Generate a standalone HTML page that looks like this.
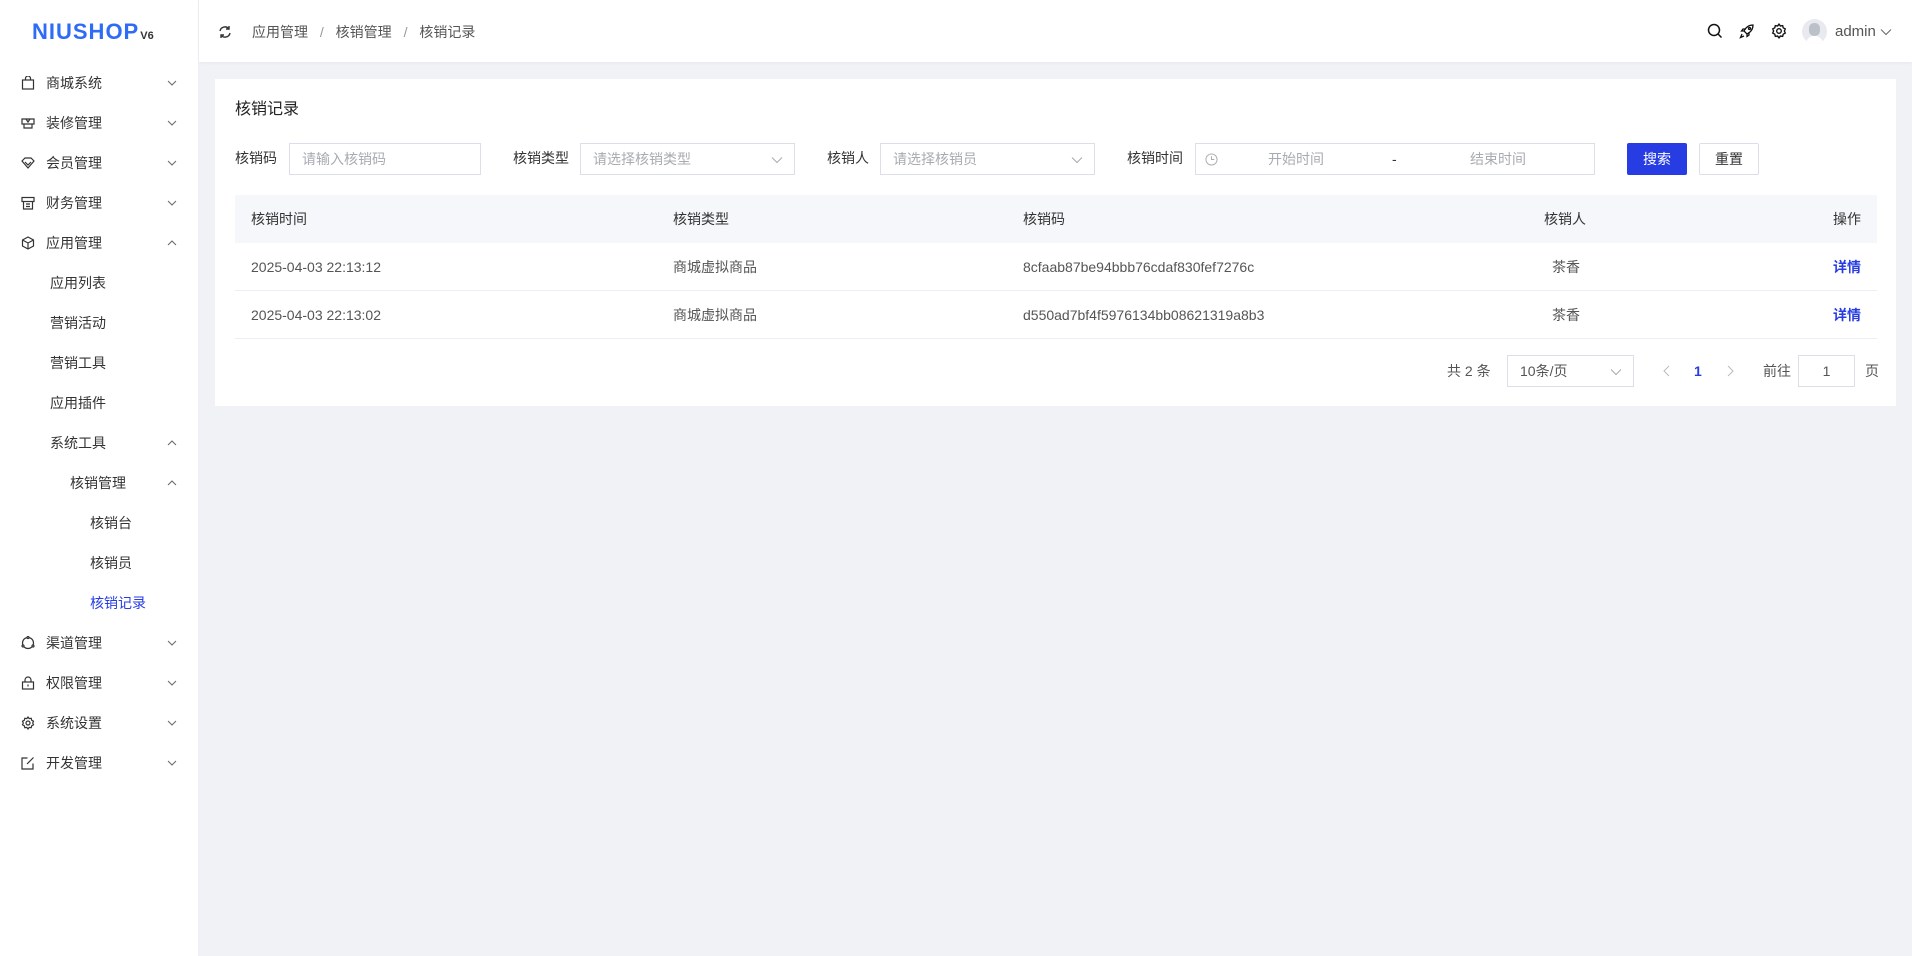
<!DOCTYPE html>
<html><head><meta charset="utf-8"><style>
*{box-sizing:border-box;margin:0;padding:0}
body{width:1912px;height:956px;background:#f0f2f5;font-family:"Liberation Sans","Noto Sans CJK SC",sans-serif;font-size:14px;color:#333;position:relative;overflow:hidden}
.abs{position:absolute}
.side{left:0;top:0;width:199px;height:956px;background:#fff;border-right:1px solid #eef0f3}
.logo{left:32px;top:19px;font-weight:900;font-size:22px;color:#2f6cf6;letter-spacing:1px;font-family:"Liberation Sans",sans-serif}
.logo small{font-size:11px;color:#333;font-weight:700;margin-left:1px;letter-spacing:0}
.mi{position:absolute;left:0;width:199px;height:40px;line-height:40px;color:#333;font-size:14px;white-space:nowrap}
.mi svg.ic{position:absolute;left:21px;top:13px}
.mi .ch{position:absolute;left:167px;top:16px}
.hdr{left:199px;top:0;width:1713px;height:62px;background:#fff;box-shadow:0 1px 3px rgba(0,0,0,.04)}
.card{left:215px;top:79px;width:1681px;height:327px;background:#fff}
.lbl{font-size:14px;color:#333;line-height:31px;top:143px}
.inp{top:143px;height:32px;border:1px solid #dcdfe6;background:#fff;color:#a8abb2;line-height:30px;padding-left:12px;font-size:14px}
.th{top:195px;left:235px;width:1642px;height:48px;background:#f5f7fa}
.row{left:235px;width:1642px;height:48px;border-bottom:1px solid #ebeef5}
.t{position:absolute;line-height:48px;font-size:14px;color:#555;white-space:nowrap}
.th .t{color:#333}
</style></head><body>
<div class="abs side">
<div class="abs logo">NIUSHOP<small>V6</small></div>
</div>
<div style="position:absolute;left:0;top:0">
<div class="mi" style="top:63px"><svg class="ic" width="14" height="14" viewBox="0 0 14 14" fill="none" stroke="#333" stroke-width="1.2"><rect x="1.5" y="4" width="11" height="9"/><path d="M4.5 4V2.5a2.5 2.5 0 0 1 5 0V4"/></svg><span style="position:absolute;left:46px">商城系统</span><svg class="ch" width="10" height="8" viewBox="0 0 10 8" fill="none" stroke="#666"><path d="M1 2l4 4 4-4"/></svg></div>
<div class="mi" style="top:103px"><svg class="ic" width="14" height="14" viewBox="0 0 14 14" fill="none" stroke="#333" stroke-width="1.2"><path d="M1 3h12v5H1zM3 8v4h8V8M5 3l2 3 2-3"/></svg><span style="position:absolute;left:46px">装修管理</span><svg class="ch" width="10" height="8" viewBox="0 0 10 8" fill="none" stroke="#666"><path d="M1 2l4 4 4-4"/></svg></div>
<div class="mi" style="top:143px"><svg class="ic" width="14" height="14" viewBox="0 0 14 14" fill="none" stroke="#333" stroke-width="1.2"><path d="M1 5l3-3h6l3 3-6 7z"/><path d="M4 6l3 3 3-3"/></svg><span style="position:absolute;left:46px">会员管理</span><svg class="ch" width="10" height="8" viewBox="0 0 10 8" fill="none" stroke="#666"><path d="M1 2l4 4 4-4"/></svg></div>
<div class="mi" style="top:183px"><svg class="ic" width="14" height="14" viewBox="0 0 14 14" fill="none" stroke="#333" stroke-width="1.2"><rect x="1" y="1.5" width="12" height="4"/><path d="M2.5 5.5V13h9V5.5M5 8h4M5 10.5h4"/></svg><span style="position:absolute;left:46px">财务管理</span><svg class="ch" width="10" height="8" viewBox="0 0 10 8" fill="none" stroke="#666"><path d="M1 2l4 4 4-4"/></svg></div>
<div class="mi" style="top:223px"><svg class="ic" width="14" height="14" viewBox="0 0 14 14" fill="none" stroke="#333" stroke-width="1.2"><path d="M7 1l5.5 3v6L7 13 1.5 10V4zM1.5 4L7 7l5.5-3M7 7v6"/></svg><span style="position:absolute;left:46px">应用管理</span><svg class="ch" width="10" height="8" viewBox="0 0 10 8" fill="none" stroke="#666"><path d="M1 6l4-4 4 4"/></svg></div>
<div class="mi" style="top:263px"><span style="position:absolute;left:50px">应用列表</span></div>
<div class="mi" style="top:303px"><span style="position:absolute;left:50px">营销活动</span></div>
<div class="mi" style="top:343px"><span style="position:absolute;left:50px">营销工具</span></div>
<div class="mi" style="top:383px"><span style="position:absolute;left:50px">应用插件</span></div>
<div class="mi" style="top:423px"><span style="position:absolute;left:50px">系统工具</span><svg class="ch" width="10" height="8" viewBox="0 0 10 8" fill="none" stroke="#666"><path d="M1 6l4-4 4 4"/></svg></div>
<div class="mi" style="top:463px"><span style="position:absolute;left:70px">核销管理</span><svg class="ch" width="10" height="8" viewBox="0 0 10 8" fill="none" stroke="#666"><path d="M1 6l4-4 4 4"/></svg></div>
<div class="mi" style="top:503px"><span style="position:absolute;left:90px">核销台</span></div>
<div class="mi" style="top:543px"><span style="position:absolute;left:90px">核销员</span></div>
<div class="mi" style="top:583px;color:#273de3"><span style="position:absolute;left:90px">核销记录</span></div>
<div class="mi" style="top:623px"><svg class="ic" width="14" height="14" viewBox="0 0 14 14" fill="none" stroke="#333" stroke-width="1.2"><circle cx="7" cy="7" r="5.5"/><circle cx="7" cy="1.5" r="1" fill="#fff"/><circle cx="2" cy="10" r="1" fill="#fff"/><circle cx="12" cy="10" r="1" fill="#fff"/></svg><span style="position:absolute;left:46px">渠道管理</span><svg class="ch" width="10" height="8" viewBox="0 0 10 8" fill="none" stroke="#666"><path d="M1 2l4 4 4-4"/></svg></div>
<div class="mi" style="top:663px"><svg class="ic" width="14" height="14" viewBox="0 0 14 14" fill="none" stroke="#333" stroke-width="1.2"><rect x="1.5" y="6" width="11" height="7"/><path d="M4 6V4a3 3 0 0 1 6 0v2M7 8.5v2"/></svg><span style="position:absolute;left:46px">权限管理</span><svg class="ch" width="10" height="8" viewBox="0 0 10 8" fill="none" stroke="#666"><path d="M1 2l4 4 4-4"/></svg></div>
<div class="mi" style="top:703px"><svg class="ic" width="14" height="14" viewBox="0 0 14 14" fill="none" stroke="#333" stroke-width="1.2"><path d="M7 1l1.2 1.6 2-.3.5 1.9 1.8 1-.8 1.8.8 1.8-1.8 1-.5 1.9-2-.3L7 13l-1.2-1.6-2 .3-.5-1.9-1.8-1 .8-1.8-.8-1.8 1.8-1 .5-1.9 2 .3z"/><circle cx="7" cy="7" r="2"/></svg><span style="position:absolute;left:46px">系统设置</span><svg class="ch" width="10" height="8" viewBox="0 0 10 8" fill="none" stroke="#666"><path d="M1 2l4 4 4-4"/></svg></div>
<div class="mi" style="top:743px"><svg class="ic" width="14" height="14" viewBox="0 0 14 14" fill="none" stroke="#333" stroke-width="1.2"><path d="M12 7.5V13H1V2h5.5M6 8l6.5-6.5"/></svg><span style="position:absolute;left:46px">开发管理</span><svg class="ch" width="10" height="8" viewBox="0 0 10 8" fill="none" stroke="#666"><path d="M1 2l4 4 4-4"/></svg></div>
</div>
<div class="abs hdr">
<svg class="abs" style="left:19px;top:25px" width="14" height="14" viewBox="0 0 14 14" fill="none" stroke="#333" stroke-width="1.4"><path d="M2 6a5 5 0 0 1 9-2M12 8a5 5 0 0 1-9 2"/><path d="M11 1v3H8M3 13v-3h3"/></svg>
<div class="abs" style="left:53px;top:22px;line-height:20px;color:#555">应用管理 <span style="color:#999;margin:0 8px">/</span> 核销管理 <span style="color:#999;margin:0 8px">/</span> 核销记录</div>
<svg class="abs" style="left:1508px;top:23px" width="16" height="16" viewBox="0 0 16 16" fill="none" stroke="#111" stroke-width="1.5"><circle cx="7" cy="7" r="5.5"/><path d="M11 11l3.5 3.5"/></svg>
<svg class="abs" style="left:1540px;top:23px" width="16" height="16" viewBox="0 0 16 16" fill="none" stroke="#111" stroke-width="1.3"><path d="M14 2c-4 0-7 2-9 6l3 3c4-2 6-5 6-9zM5 8H2.5L4 6h3M8 11v2.5L10 12V9"/><circle cx="10.5" cy="5.5" r="1"/><path d="M3 11l-1.5 3.5L5 13"/></svg>
<svg class="abs" style="left:1572px;top:23px" width="16" height="16" viewBox="0 0 14 14" fill="none" stroke="#111" stroke-width="1.2"><path d="M7 1l1.2 1.6 2-.3.5 1.9 1.8 1-.8 1.8.8 1.8-1.8 1-.5 1.9-2-.3L7 13l-1.2-1.6-2 .3-.5-1.9-1.8-1 .8-1.8-.8-1.8 1.8-1 .5-1.9 2 .3z"/><circle cx="7" cy="7" r="2"/></svg>
<div class="abs" style="left:1603px;top:19px;width:25px;height:25px;border-radius:50%;background:#e8eaf0;overflow:hidden"><div style="position:absolute;left:7px;top:4px;width:11px;height:13px;border-radius:5px;background:#bcc0c9"></div><div style="position:absolute;left:4px;top:17px;width:17px;height:10px;border-radius:8px 8px 0 0;background:#fff"></div></div>
<div class="abs" style="left:1636px;top:22px;line-height:20px;color:#555;font-size:15px">admin</div>
<svg class="abs" style="left:1681px;top:28px" width="12" height="8" viewBox="0 0 12 8" fill="none" stroke="#666"><path d="M1 1.5l5 5 5-5"/></svg>
</div>
<div class="abs card"></div>
<div class="abs" style="left:235px;top:100px;font-size:16px;color:#222;line-height:20px">核销记录</div>
<div class="abs lbl" style="left:235px">核销码</div>
<div class="abs inp" style="left:289px;width:192px">请输入核销码</div>
<div class="abs lbl" style="left:513px">核销类型</div>
<div class="abs inp" style="left:580px;width:215px">请选择核销类型<svg style="position:absolute;right:11px;top:12px" width="12" height="8" viewBox="0 0 12 8" fill="none" stroke="#aaa"><path d="M1 1.5l5 5 5-5"/></svg></div>
<div class="abs lbl" style="left:827px">核销人</div>
<div class="abs inp" style="left:880px;width:215px">请选择核销员<svg style="position:absolute;right:11px;top:12px" width="12" height="8" viewBox="0 0 12 8" fill="none" stroke="#aaa"><path d="M1 1.5l5 5 5-5"/></svg></div>
<div class="abs lbl" style="left:1127px">核销时间</div>
<div class="abs inp" style="left:1195px;width:400px;padding:0"><svg style="position:absolute;left:9px;top:9px" width="13" height="13" viewBox="0 0 14 14" fill="none" stroke="#aaa"><circle cx="7" cy="7" r="6"/><path d="M7 3.5V7h3"/></svg><span style="position:absolute;left:72px">开始时间</span><span style="position:absolute;left:196px;color:#333">-</span><span style="position:absolute;left:274px">结束时间</span></div>
<div class="abs" style="left:1627px;top:143px;width:60px;height:32px;background:#273de3;color:#fff;text-align:center;line-height:32px;border-radius:2px">搜索</div>
<div class="abs" style="left:1699px;top:143px;width:60px;height:32px;border:1px solid #dcdfe6;color:#333;text-align:center;line-height:30px;border-radius:2px">重置</div>
<div class="abs th"><span class="t" style="left:16px">核销时间</span><span class="t" style="left:438px">核销类型</span><span class="t" style="left:788px">核销码</span><span class="t" style="left:1309px">核销人</span><span class="t" style="right:16px">操作</span></div>
<div class="abs row" style="top:243px"><span class="t" style="left:16px">2025-04-03 22:13:12</span><span class="t" style="left:438px">商城虚拟商品</span><span class="t" style="left:788px">8cfaab87be94bbb76cdaf830fef7276c</span><span class="t" style="left:1317px">茶香</span><span class="t" style="right:16px;color:#273de3;font-weight:bold">详情</span></div>
<div class="abs row" style="top:291px"><span class="t" style="left:16px">2025-04-03 22:13:02</span><span class="t" style="left:438px">商城虚拟商品</span><span class="t" style="left:788px">d550ad7bf4f5976134bb08621319a8b3</span><span class="t" style="left:1317px">茶香</span><span class="t" style="right:16px;color:#273de3;font-weight:bold">详情</span></div>
<div class="abs" style="left:1447px;top:361px;line-height:20px;color:#555">共 2 条</div>
<div class="abs inp" style="left:1507px;top:355px;width:127px;color:#555">10条/页<svg style="position:absolute;right:11px;top:12px" width="12" height="8" viewBox="0 0 12 8" fill="none" stroke="#aaa"><path d="M1 1.5l5 5 5-5"/></svg></div>
<svg class="abs" style="left:1663px;top:365px" width="8" height="12" viewBox="0 0 8 12" fill="none" stroke="#bbb"><path d="M6 1L1 6l5 5"/></svg>
<div class="abs" style="left:1694px;top:361px;line-height:20px;color:#273de3;font-weight:bold">1</div>
<svg class="abs" style="left:1726px;top:365px" width="8" height="12" viewBox="0 0 8 12" fill="none" stroke="#bbb"><path d="M2 1l5 5-5 5"/></svg>
<div class="abs" style="left:1763px;top:361px;line-height:20px;color:#555">前往</div>
<div class="abs inp" style="left:1798px;top:355px;width:57px;text-align:center;padding:0;color:#555">1</div>
<div class="abs" style="left:1865px;top:361px;line-height:20px;color:#555">页</div>
</body></html>
